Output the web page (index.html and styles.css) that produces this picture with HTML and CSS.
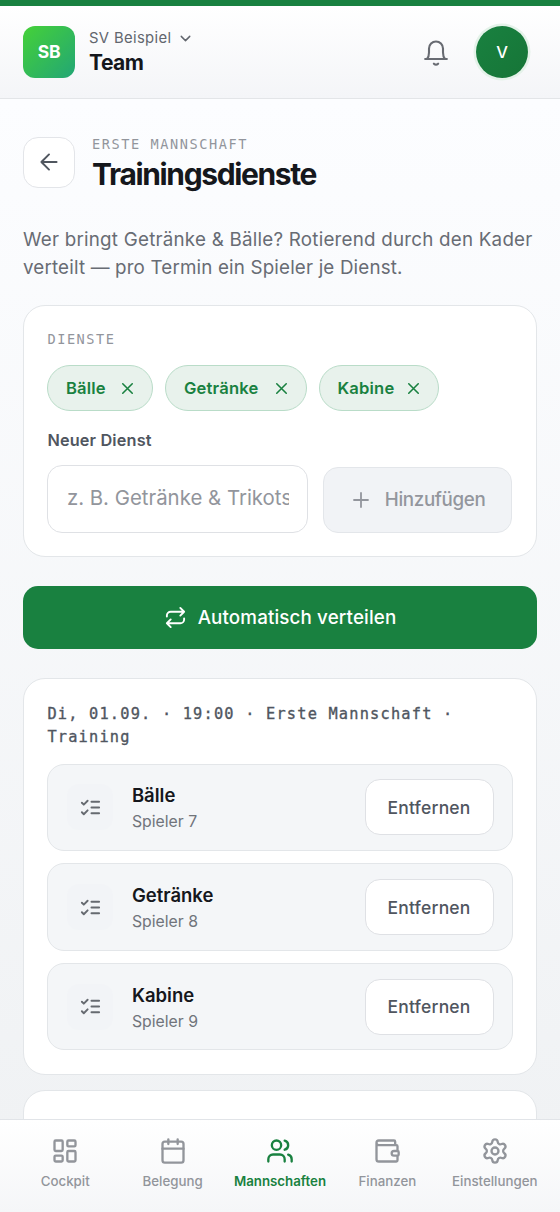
FILE: index.html
```html
<!DOCTYPE html>
<html lang="de">
<head>
<meta charset="utf-8">
<meta name="viewport" content="width=device-width, initial-scale=1">
<title>Trainingsdienste</title>
<link rel="stylesheet" href="styles.css">
</head>
<body>
<svg class="sprite" aria-hidden="true">
  <symbol id="checks" viewBox="0 0 24 24"><path d="m3 17 2 2 4-4M3 7l2 2 4-4M13 6h8M13 12h8M13 18h8"/></symbol>
  <symbol id="close" viewBox="0 0 24 24"><path d="M18 6 6 18M6 6l12 12"/></symbol>
</svg>
<div class="app">
  <header class="header">
    <div class="logo">SB</div>
    <div class="club">
      <div class="club-name"><span>SV Beispiel</span><svg class="icon chevron" viewBox="0 0 24 24"><path d="m6 9 6 6 6-6"/></svg></div>
      <div class="club-area">Team</div>
    </div>
    <svg class="icon bell" viewBox="0 0 24 24"><path d="M2.700 18h18.600M4.300 18c1.300-1.400 1.700-3.200 1.700-5.500V9a6 6 0 0 1 12 0v3.500c0 2.300.4 4.100 1.700 5.500M10.200 22c1 1 2.600 1 3.600 0"/></svg>
    <div class="avatar">V</div>
  </header>
  <main class="main">
    <div class="page-head">
      <button class="back" aria-label="Zurück"><svg class="icon" viewBox="0 0 24 24"><path d="m12 19-7-7 7-7M19 12H5"/></svg></button>
      <div class="heading">
        <div class="eyebrow">ERSTE MANNSCHAFT</div>
        <h1 class="title">Trainingsdienste</h1>
      </div>
    </div>
    <p class="intro"><span class="intro-first">Wer bringt Getränke &amp; Bälle? Rotierend durch den Kader</span><br>verteilt — pro Termin ein Spieler je Dienst.</p>
    <section class="card duties">
      <div class="eyebrow">DIENSTE</div>
      <div class="chips">
        <div class="chip chip-a"><span>Bälle</span><svg class="icon"><use href="#close"/></svg></div>
        <div class="chip chip-b"><span>Getränke</span><svg class="icon"><use href="#close"/></svg></div>
        <div class="chip chip-c"><span>Kabine</span><svg class="icon"><use href="#close"/></svg></div>
      </div>
      <div class="label">Neuer Dienst</div>
      <div class="form">
        <div class="field"><span>z. B. Getränke &amp; Trikots</span></div>
        <button class="add"><svg class="icon" viewBox="0 0 24 24"><path d="M5 12h14M12 5v14"/></svg><span>Hinzufügen</span></button>
      </div>
    </section>
    <button class="distribute"><svg class="icon" viewBox="0 0 24 24"><path d="m17 2 4 4-4 4M3 11v-1a4 4 0 0 1 4-4h14M7 22l-4-4 4-4M21 13v1a4 4 0 0 1-4 4H3"/></svg><span>Automatisch verteilen</span></button>
    <section class="card event">
      <div class="event-date">Di, 01.09. · 19:00 · Erste Mannschaft ·<br>Training</div>
      <div class="rows">
        <div class="row"><div class="row-icon"><svg class="icon"><use href="#checks"/></svg></div><div class="row-text"><div class="row-name">Bälle</div><div class="row-player">Spieler 7</div></div><button class="remove">Entfernen</button></div>
        <div class="row"><div class="row-icon"><svg class="icon"><use href="#checks"/></svg></div><div class="row-text"><div class="row-name">Getränke</div><div class="row-player">Spieler 8</div></div><button class="remove">Entfernen</button></div>
        <div class="row"><div class="row-icon"><svg class="icon"><use href="#checks"/></svg></div><div class="row-text"><div class="row-name">Kabine</div><div class="row-player">Spieler 9</div></div><button class="remove">Entfernen</button></div>
      </div>
    </section>
    <section class="card next-event"></section>
  </main>
  <nav class="nav">
    <div class="tab"><svg class="icon" viewBox="0 0 24 24"><rect x="3" y="3" width="7" height="9" rx="1"/><rect x="14" y="3" width="7" height="5" rx="1"/><rect x="14" y="12" width="7" height="9" rx="1"/><rect x="3" y="16" width="7" height="5" rx="1"/></svg><span>Cockpit</span></div>
    <div class="tab"><svg class="icon" viewBox="0 0 24 24"><path d="M8 2v4M16 2v4M3 10h18"/><rect x="3" y="4" width="18" height="18" rx="2"/></svg><span>Belegung</span></div>
    <div class="tab tab-active"><svg class="icon" viewBox="0 0 24 24"><path d="M16 21v-2a4 4 0 0 0-4-4H6a4 4 0 0 0-4 4v2M22 21v-2a4 4 0 0 0-3-3.870M16 3.130a4 4 0 0 1 0 7.750"/><circle cx="9" cy="7" r="4"/></svg><span>Mannschaften</span></div>
    <div class="tab"><svg class="icon" viewBox="0 0 24 24"><path d="M19 7V4a1 1 0 0 0-1-1H5a2 2 0 0 0 0 4h15a1 1 0 0 1 1 1v4h-3a2 2 0 0 0 0 4h3a1 1 0 0 0 1-1v-2a1 1 0 0 0-1-1M3 5v14a2 2 0 0 0 2 2h15a1 1 0 0 0 1-1v-4"/></svg><span>Finanzen</span></div>
    <div class="tab tab-settings"><svg class="icon" viewBox="0 0 24 24"><path d="M9.671 4.136a2.340 2.340 0 0 1 4.659 0 2.340 2.340 0 0 0 3.319 1.915 2.340 2.340 0 0 1 2.330 4.033 2.340 2.340 0 0 0 0 3.831 2.340 2.340 0 0 1-2.330 4.033 2.340 2.340 0 0 0-3.319 1.915 2.340 2.340 0 0 1-4.659 0 2.340 2.340 0 0 0-3.320-1.915 2.340 2.340 0 0 1-2.330-4.033 2.340 2.340 0 0 0 0-3.831A2.340 2.340 0 0 1 6.350 6.051a2.340 2.340 0 0 0 3.319-1.915"/><circle cx="12" cy="12" r="3"/></svg><span>Einstellungen</span></div>
  </nav>
</div>
</body>
</html>
```
FILE: styles.css
```css
* { box-sizing: border-box; }
body { margin: 0; font-family: "Inter", "Liberation Sans", sans-serif; color: #15171c; }
button { font: inherit; margin: 0; padding: 0; cursor: pointer; }
.sprite { display: none; }
.icon { display: block; flex: none; fill: none; stroke: currentColor; stroke-width: 2; stroke-linecap: round; stroke-linejoin: round; }
.app { height: 1212px; display: flex; flex-direction: column; overflow: hidden; background: linear-gradient(#fcfdff 100px, #f0f2f4 1130px); }

.header { height: 99px; flex: none; display: flex; align-items: center; padding: 0 32px 0 23px; border-top: 6px solid #198140; border-bottom: 1px solid #e3e5e8; background: linear-gradient(#ffffff, #f4f5f8); }
.logo { width: 52px; height: 52px; margin-top: -1px; border-radius: 12px; display: grid; place-items: center; background: linear-gradient(135deg, #45d138, #22a675); color: #fff; font-size: 17.500px; font-weight: 700; letter-spacing: -0.2px; }
.club { margin-left: 14px; flex: 1; }
.club-name { display: flex; align-items: center; gap: 6px; height: 22px; color: #62666e; font-size: 14.800px; letter-spacing: 0.360px; }
.chevron { width: 17px; height: 17px; }
.club-area { height: 28px; line-height: 28px; font-size: 21px; font-weight: 700; letter-spacing: -0.500px; }
.bell { width: 28px; height: 28px; margin: -1px 26px 0 0; color: #686b72; stroke-width: 1.800; }
.avatar { width: 52px; height: 52px; margin-top: -1px; border-radius: 50%; display: grid; place-items: center; background: linear-gradient(135deg, #198140, #167537); color: #fff; font-size: 16.500px; font-weight: 500; box-shadow: 0 0 0 2.500px #e4f2e9; }

.main { flex: 1; min-height: 0; overflow: hidden; padding: 38px 23px 0; }
.page-head { height: 52px; display: flex; }
.back { width: 52px; height: 51px; border: 1.400px solid #e3e5e9; border-radius: 15px; display: grid; place-items: center; background: #fff; color: #50565f; }
.back .icon { width: 26px; height: 26px; margin: -1px 0 0 -1px; stroke-width: 1.800; }
.heading { margin-left: 17px; }
.eyebrow { font-family: "DejaVu Sans Mono", monospace; font-size: 13.600px; line-height: 16px; letter-spacing: 1.560px; color: #92959c; }
.heading .eyebrow { margin-top: -1px; }
.title { margin: 3px 0 0; font-size: 30px; line-height: 39px; font-weight: 700; letter-spacing: -1.360px; }
.intro { margin: 36.500px 0 0; font-size: 18.800px; line-height: 28.700px; letter-spacing: 0.160px; white-space: nowrap; color: #686c74; }
.intro-first { letter-spacing: 0.220px; }
.card { background: #fff; border: 1.400px solid #e3e6e9; border-radius: 22px; }
.duties { height: 252px; margin-top: 22px; padding: 25px 23px 0 23.400px; }
.chips { display: flex; gap: 12px; margin-top: 18.500px; }
.chip { height: 46px; border: 1.400px solid #b9dcc8; border-radius: 23px; background: #e8f2ec; color: #198140; font-size: 16.600px; font-weight: 600; display: flex; align-items: center; justify-content: space-between; padding: 0 15px 0 17.500px; }
.chip span { letter-spacing: 0.200px; margin-top: -1px; }
.chip .icon { width: 19px; height: 19px; }
.chip-a { width: 106px; }
.chip-b { width: 141.500px; }
.chip-c { width: 120px; }
.label { margin-top: 18px; line-height: 22px; font-size: 16.300px; font-weight: 600; letter-spacing: 0.150px; color: #50565f; }
.form { display: flex; align-items: flex-end; gap: 14.500px; margin-top: 13.500px; }
.field { width: 261px; height: 68px; border: 1.400px solid #dfe1e5; border-radius: 15px; padding: 0 18.500px; display: flex; align-items: center; color: #92959c; font-size: 20.400px; }
.field span { overflow: hidden; white-space: nowrap; line-height: 30px; margin-top: -1px; }
.add { width: 189px; height: 66px; border: 1.400px solid #e3e6ea; border-radius: 15px; background: #f1f3f6; color: #93969d; display: flex; align-items: center; justify-content: center; gap: 11.500px; font-size: 18.800px; font-weight: 500; letter-spacing: -0.350px; }
.add .icon { width: 24px; height: 24px; stroke-width: 1.800; }
.distribute { width: 100%; height: 63px; margin-top: 29px; border: 0; border-radius: 15px; background: #198140; color: #fff; display: flex; align-items: center; justify-content: center; gap: 11px; font-size: 18.800px; font-weight: 500; letter-spacing: 0.130px; }
.distribute .icon { width: 23px; height: 23px; }
.event { height: 397px; margin-top: 29.400px; padding: 24px 23.500px 0 23.400px; }
.event-date { font-family: "DejaVu Sans Mono", monospace; font-size: 15.300px; line-height: 23px; letter-spacing: 1.200px; color: #50565f; -webkit-text-stroke: 0.350px #50565f; white-space: nowrap; }
.rows { display: grid; gap: 12.500px; margin-top: 14.500px; }
.row { height: 87.200px; border: 1.400px solid #e3e6e9; border-radius: 17px; background: #f4f6f8; display: flex; align-items: center; padding: 0 18px 0 19px; }
.row-icon { width: 46px; height: 46px; border-radius: 12px; background: #f2f4f7; display: grid; place-items: center; color: #666a70; }
.row-icon .icon { width: 23px; height: 23px; }
.row-text { margin: 3px 0 0 18.500px; flex: 1; }
.row-name { font-size: 18.500px; line-height: 27px; font-weight: 600; }
.row-player { font-size: 15.800px; line-height: 26px; color: #70747b; }
.remove { width: 129px; height: 56px; border: 1.400px solid #dfe1e5; border-radius: 15px; background: #fff; color: #50565f; font-size: 17.500px; font-weight: 500; letter-spacing: 0.200px; }
.next-event { height: 120px; margin-top: 15px; }

.nav { height: 93px; flex: none; border-top: 1.400px solid #e1e4e8; background: linear-gradient(#ffffff, #f5f6f8); display: grid; grid-template-columns: repeat(5, 107.400px); justify-content: center; padding-top: 17px; color: #92959b; }
.tab { display: flex; flex-direction: column; align-items: center; gap: 7px; font-size: 13.300px; line-height: 20px; font-weight: 500; }
.tab .icon { width: 28px; height: 28px; margin-bottom: -1px; }
.tab-active { color: #198140; font-weight: 600; }
```
